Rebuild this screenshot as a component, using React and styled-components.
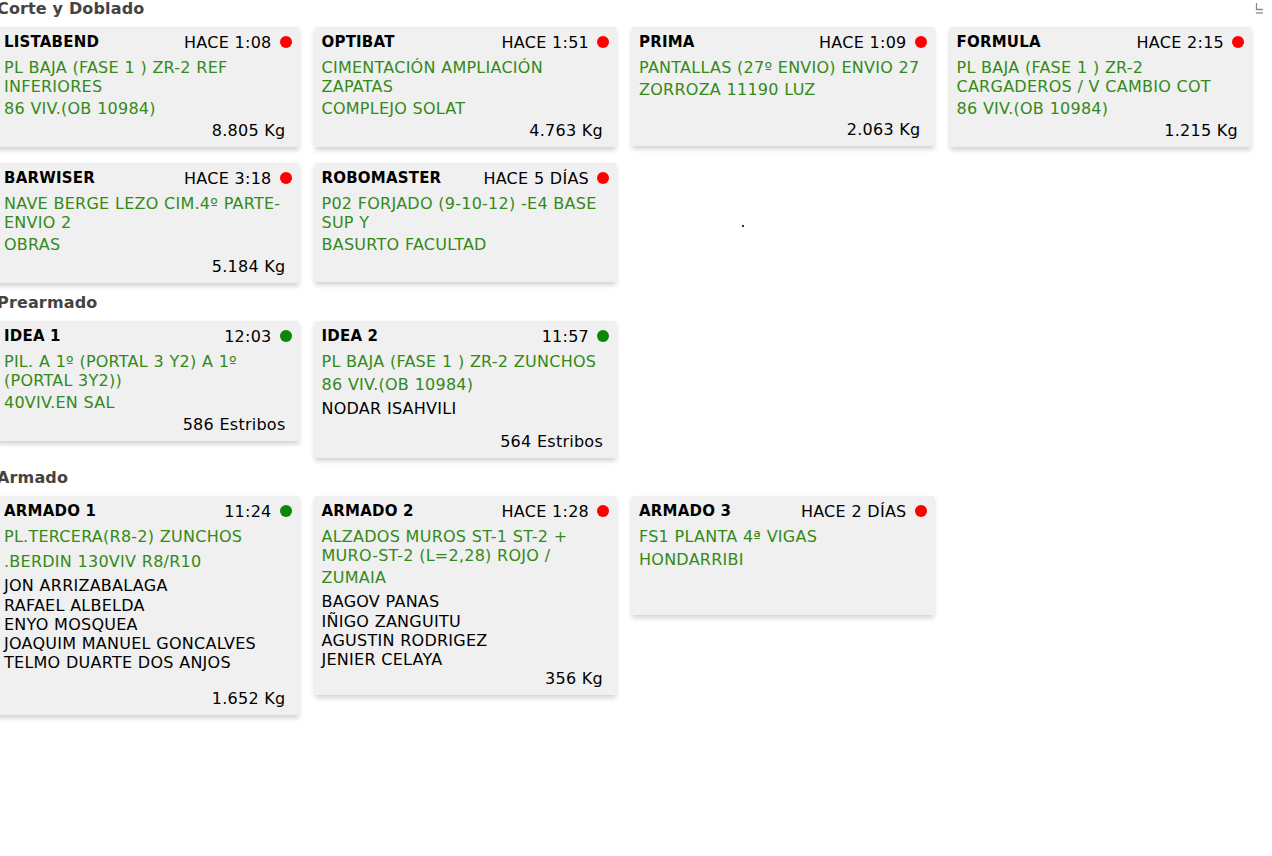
import React from "react";
import styled, { createGlobalStyle } from "styled-components";

const GlobalStyle = createGlobalStyle`
  html, body { margin: 0; padding: 0; background: #ffffff; }
  body {
    font-family: "DejaVu Sans", Verdana, sans-serif;
    color: #000;
    overflow: hidden;
  }
`;

const Page = styled.div`
  position: relative;
  width: 1254px;
  margin-left: -3px;
  height: 856px;
`;

const Section = styled.section`
  margin-bottom: 11px;
`;

const SectionTitle = styled.h2`
  margin: 0 0 9px 0;
  font-size: 16px;
  line-height: 18px;
  font-weight: bold;
  letter-spacing: 0.15px;
  color: #444;
`;

const Grid = styled.div`
  display: grid;
  grid-template-columns: repeat(4, 1fr);
  column-gap: 16px;
  row-gap: 16px;
  align-items: start;
`;

const Card = styled.div`
  box-sizing: border-box;
  min-height: 119px;
  display: flex;
  flex-direction: column;
  padding: 0 7px 7px 7px;
  background: #f0f0f0;
  box-shadow: 0 3px 5px rgba(0, 0, 0, 0.18);
`;

const CardHeader = styled.div`
  display: flex;
  align-items: center;
  justify-content: space-between;
  height: 20px;
  margin: 5px 0 6px 0;
`;

const Machine = styled.span`
  font-size: 15px;
  font-weight: bold;
  letter-spacing: 0.2px;
  color: #000;
`;

const Status = styled.span`
  display: flex;
  align-items: center;
  gap: 8px;
  font-size: 16px;
  letter-spacing: 0.25px;
  word-spacing: 0.2px;
  color: #000;
`;

const Dot = styled.span`
  width: 12px;
  height: 12px;
  border-radius: 50%;
  background: ${(p) => (p.$ok ? "#0a860a" : "#ff0000")};
`;

const Job = styled.div`
  font-size: 16px;
  line-height: 19px;
  letter-spacing: 0.25px;
  word-spacing: 0.2px;
  color: #338a18;
`;

const Site = styled.div`
  margin-top: ${(p) => 1 + (p.$shift || 0)}px;
  height: 24px;
  line-height: 24px;
  font-size: 16px;
  letter-spacing: 0.25px;
  word-spacing: 0.2px;
  color: #338a18;
  white-space: nowrap;
  overflow: hidden;
`;

const Workers = styled.div`
  margin-top: 2px;
  display: flex;
  flex-direction: column;
`;

const Worker = styled.div`
  font-size: 16px;
  line-height: 19.25px;
  letter-spacing: 0.25px;
  word-spacing: 0.2px;
  color: #000;
`;

const Spacer = styled.div`
  height: ${(p) => p.$h}px;
`;

const Amount = styled.div`
  margin-top: auto;
  padding-right: 6px;
  text-align: right;
  font-size: 16px;
  line-height: 19px;
  letter-spacing: 0.25px;
  word-spacing: 0.2px;
  color: #000;
`;

const Speck = styled.span`
  position: absolute;
  left: 745px;
  top: 225px;
  width: 2px;
  height: 2px;
  background: #333;
`;

const CornerIcon = styled.svg`
  position: fixed;
  top: 2px;
  left: 1255px;
`;

const sections = [
  {
    title: "Corte y Doblado",
    cards: [
      { name: "LISTABEND", status: "HACE 1:08", ok: false, job: "PL BAJA (FASE 1 ) ZR-2 REF INFERIORES", site: "86 VIV.(OB 10984)", amount: "8.805 Kg" },
      { name: "OPTIBAT", status: "HACE 1:51", ok: false, job: "CIMENTACIÓN AMPLIACIÓN ZAPATAS", site: "COMPLEJO SOLAT", amount: "4.763 Kg" },
      { name: "PRIMA", status: "HACE 1:09", ok: false, job: "PANTALLAS (27º ENVIO) ENVIO 27", site: "ZORROZA 11190 LUZ", amount: "2.063 Kg" },
      { name: "FORMULA", status: "HACE 2:15", ok: false, job: "PL BAJA (FASE 1 ) ZR-2 CARGADEROS / V CAMBIO COT", site: "86 VIV.(OB 10984)", amount: "1.215 Kg" },
      { name: "BARWISER", status: "HACE 3:18", ok: false, job: "NAVE BERGE LEZO CIM.4º PARTE-ENVIO 2", site: "OBRAS", amount: "5.184 Kg" },
      { name: "ROBOMASTER", status: "HACE 5 DÍAS", ok: false, job: "P02 FORJADO (9-10-12) -E4 BASE SUP Y", site: "BASURTO FACULTAD", amount: null },
    ],
  },
  {
    title: "Prearmado",
    cards: [
      { name: "IDEA 1", status: "12:03", ok: true, job: "PIL. A 1º (PORTAL 3 Y2) A 1º (PORTAL 3Y2))", site: "40VIV.EN SAL", amount: "586 Estribos" },
      { name: "IDEA 2", status: "11:57", ok: true, job: "PL BAJA (FASE 1 ) ZR-2 ZUNCHOS", site: "86 VIV.(OB 10984)", shift: 1, workers: ["NODAR ISAHVILI"], spacer: 14, amount: "564 Estribos" },
    ],
  },
  {
    title: "Armado",
    cards: [
      { name: "ARMADO 1", status: "11:24", ok: true, job: "PL.TERCERA(R8-2) ZUNCHOS", site: ".BERDIN 130VIV R8/R10", shift: 3, workers: ["JON ARRIZABALAGA", "RAFAEL ALBELDA", "ENYO MOSQUEA", "JOAQUIM MANUEL GONCALVES", "TELMO DUARTE DOS ANJOS"], spacer: 16, amount: "1.652 Kg" },
      { name: "ARMADO 2", status: "HACE 1:28", ok: false, job: "ALZADOS MUROS ST-1 ST-2 + MURO-ST-2 (L=2,28) ROJO /", site: "ZUMAIA", workers: ["BAGOV PANAS", "IÑIGO ZANGUITU", "AGUSTIN RODRIGEZ", "JENIER CELAYA"], amount: "356 Kg" },
      { name: "ARMADO 3", status: "HACE 2 DÍAS", ok: false, job: "FS1 PLANTA 4ª VIGAS", site: "HONDARRIBI", shift: 1, amount: null },
    ],
  },
];

function MachineCard({ card }) {
  return (
    <Card>
      <CardHeader>
        <Machine>{card.name}</Machine>
        <Status>
          {card.status}
          <Dot $ok={card.ok} />
        </Status>
      </CardHeader>
      <Job>{card.job}</Job>
      <Site $shift={card.shift}>{card.site}</Site>
      {card.workers && (
        <Workers>
          {card.workers.map((w) => (
            <Worker key={w}>{w}</Worker>
          ))}
        </Workers>
      )}
      {card.spacer && <Spacer $h={card.spacer} />}
      {card.amount && <Amount>{card.amount}</Amount>}
    </Card>
  );
}

export default function App() {
  return (
    <>
      <GlobalStyle />
      <Page>
        {sections.map((s) => (
          <Section key={s.title}>
            <SectionTitle>{s.title}</SectionTitle>
            <Grid>
              {s.cards.map((c) => (
                <MachineCard key={c.name} card={c} />
              ))}
            </Grid>
          </Section>
        ))}
        <Speck />
      </Page>
      <CornerIcon width="9" height="13" viewBox="0 0 9 13">
        <path d="M1.5 1 V7.5 H8" fill="none" stroke="#8a8a8a" strokeWidth="1.3" />
        <path d="M1 11 H8" fill="none" stroke="#8a8a8a" strokeWidth="1.3" />
      </CornerIcon>
    </>
  );
}
